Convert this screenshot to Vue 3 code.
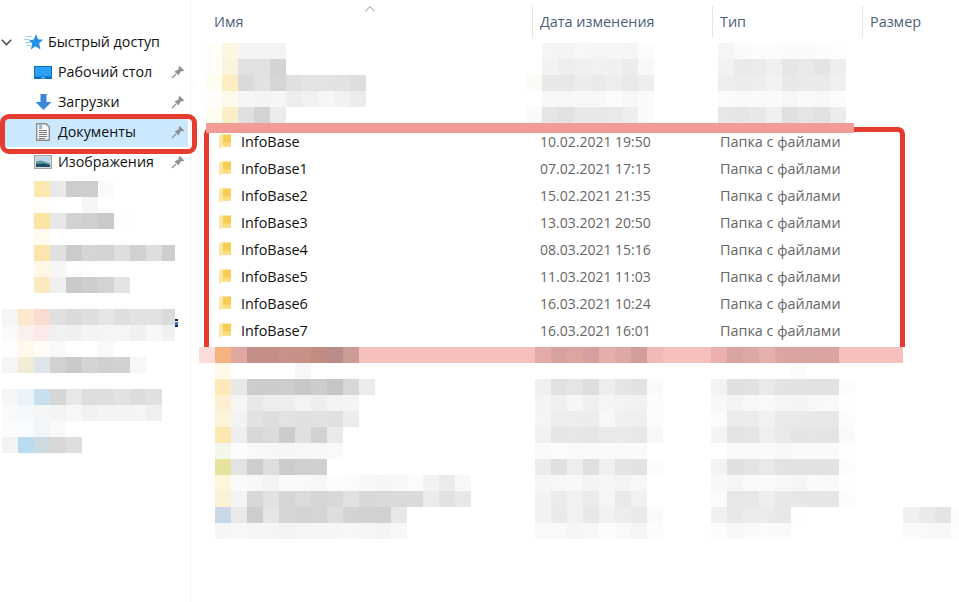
<script setup>
const g = (list) => list.map((v) => (typeof v === 'number' ? `rgb(${v},${v},${v})` : v))

const topName = [
  ['#fffdf8', '#fdf6e3', 244, 243, 243],
  ['#fffdf5', '#fbf4dc', 225, 226, 212],
  ['#fffcf0', '#fcedc2', 218, 226, 214, 224, 228, 227, 226, 222],
  ['#fffefb', '#fdfaec', 246, 244, 246, 238, 241, 246, 242, 236],
  ['#fffcf2', '#fbeec8', 224, 211, 236],
].map(g)
const topDate = [
  [255, 245, 244, 247, 246, 246, 245, 252],
  [255, 242, 238, 240, 241, 240, 236, 248],
  ['#fcfaf6', 232, 231, 236, 234, 238, 233, 238],
  [255, 248, 247, 248, 248, 252, 247, 250],
  ['#fbf9f9', 229, 226, 232, 232, 233, 238, 250],
].map(g)
const topType = [
  [245, 250, 252, 252, 250, 250, 252, 254],
  [242, 234, 235, 240, 230, 233, 228, 238],
  [238, 236, 237, 242, 232, 234, 234, 240],
  [251, 249, 250, 250, 247, 250, 248, 252],
  [231, 229, 232, 240, 224, 229, 226, 236],
].map(g)

const botPink = ['#fbdcda', '#f5b382', '#e1a8a2', '#c28e8a', '#c48e86', '#c99189', '#c79187', '#c38c80', '#b98b8a', '#cd9c95']
const botName = [
  ['#fff9ea', 255, 255, 255, 255, 247],
  ['#fde9b9', 232, 205, 204, 205, 200, 204, 197, 215, 236],
  ['#fbf0d0', 246, 232, 238, 237, 243, 238, 243, 244],
  ['#fdf3d8', 243, 226, 222, 227, 224, 226, 224, 236],
  ['#fbe8b0', 238, 216, 220, 204, 224, 210, 234],
  ['#f3f7e8', 252, 249, 247, 246, 247, 248, 249],
  ['#e5e39f', 227, 205, 222, 203, 207, 208],
  ['#fef5db', 250, 247, 243, 250, 249, 247, 252, 251, 248, 246, 248, 251, 242, 235, 248],
  ['#fbf1d4', 244, 215, 226, 214, 219, 214, 216, 225, 216, 218, 218, 218, 236, 226, 232],
  ['#c9d8e4', 233, 205, 229, 214, 211, 213, 222, 211, 209, 209, 232],
  [246, 248, 246, 245, 243, 245, 246, 246, 247, 246, 244, 248],
].map(g)
const botDatePink = ['#e4aaa6', '#d5a29f', '#dda5a0', '#d5a1a0', '#e4aeab', '#dda8a5', '#d29e9a', '#f0b9b5']
const botTypePink = ['#ecb1ad', '#d7a4a1', '#dcaaa6', '#e4b0ac', '#dca5a1', '#d9a5a0', '#d8a5a2', '#daa4a0']
const botDate = [
  [255, 255, 255, 255, 255, 255, 255, 255],
  [239, 225, 229, 222, 238, 229, 226, 250],
  [244, 240, 246, 240, 245, 243, 241, 252],
  [245, 237, 237, 236, 247, 240, 239, 252],
  [241, 229, 231, 229, 233, 234, 232, 248],
  [250, 252, 250, 250, 250, 250, 250],
  [236, 224, 237, 223, 240, 228, 226, 252],
  [246, 247, 248, 244, 246, 243, 247],
  [242, 235, 241, 235, 245, 233, 241],
  [242, 234, 241, 231, 241, 237, 234, 250],
  [249, 249, 245, 247, 252, 249, 245, 252],
].map(g)
const botType = [
  [255, 255, 255, 255, 255, 251, 255, 255, 255],
  [243, 224, 226, 233, 227, 226, 226, 226, 252],
  [248, 243, 247, 249, 246, 244, 247, 249, 254],
  [252, 235, 235, 241, 234, 233, 231, 232, 252],
  [244, 227, 229, 239, 233, 228, 229, 228, 250],
  [255, 250, 250, 250, 248, 250, 250, 250, 254],
  [243, 224, 227, 233, 227, 226, 226, 226, 252],
  [248, 246, 250, 250, 248, 246, 250, 249, 254],
  [251, 231, 231, 238, 232, 231, 230, 230, 252],
  [240, 232, 236, 235, 232, 254],
  [252, 248, 250, 251, 250],
].map(g)
const botSize = [[240, 234, 228, 252], [250, 249, 247, 253]].map(g)

const navA = [
  ['#fbe8ae', 233, 205, 205, 250],
  ['#fffdf5', 255, 255, 246],
  ['#fbe5a4', 231, 210, 207, 201, 254],
  ['#fffbef'],
  ['#fce5ad', 224, 203, 213, 211, 222, 209, 221, 205],
  ['#fff6e6', 246, 253],
  ['#fde9bf', 240, 202, 206, 211, 228],
].map(g)
const navB = [
  [245, '#fde9cd', '#f8dcd2', 224, 218, 222, 230, 222, 226, 226, 218],
  [250, '#fcf0ec', '#fbeaea', 241, 240, 244, 245, 245, 240, 248, 241],
  [253, '#fff9ec', '#fffcf6', 249, 255, 255, 249],
  [245, '#f1ecd5', '#dde5ea', 209, 202, 212, 208, 210, 247],
  [],
  [246, '#eaf3fa', '#c7e0f0', 214, 231, 221, 222, 226, 220, 224],
  [250, '#f6f9fc', 246, 244, 247, 241, 244, 243, 245, 239],
  [252, '#f8fcfe', '#f1f6fb', 249],
  [243, '#b9dcf3', '#cddae2', 216, 222],
].map(g)

const quick = [
  { label: 'Рабочий стол', icon: 'desktop' },
  { label: 'Загрузки', icon: 'down' },
  { label: 'Документы', icon: 'doc', active: true },
  { label: 'Изображения', icon: 'pic' },
]

const files = [
  ['InfoBase', '10.02.2021 19:50'],
  ['InfoBase1', '07.02.2021 17:15'],
  ['InfoBase2', '15.02.2021 21:35'],
  ['InfoBase3', '13.03.2021 20:50'],
  ['InfoBase4', '08.03.2021 15:16'],
  ['InfoBase5', '11.03.2021 11:03'],
  ['InfoBase6', '16.03.2021 10:24'],
  ['InfoBase7', '16.03.2021 16:01'],
]
</script>

<template>
  <div class="window">
    <aside class="nav">
      <div class="quick-head">
        <svg class="caret" width="11" height="7" viewBox="0 0 11 7"><path d="M.8.8 5.500 5.500 10.200.8" fill="none" stroke="#505050" stroke-width="1.600" /></svg>
        <svg class="star" width="19" height="16" viewBox="0 0 19 16">
          <path d="M12 0 14 5.300 19 5.800 15.200 9.300 16.400 15.500 11.500 12.300 6.800 15.500 8.200 9.600 5 6.500 9.800 5.500Z" fill="#2391ea" />
          <path d="M2 2.500H8M0 5.500H5.500M1 8.500H6.500M3 11.500H7" stroke="#9ed0f6" stroke-width="1.200" />
        </svg>
        <span class="q-text">Быстрый доступ</span>
      </div>
      <div v-for="q in quick" :key="q.label" class="quick-row" :class="{ active: q.active }">
        <span class="q-icon">
          <svg v-if="q.icon === 'desktop'" width="18" height="13" viewBox="0 0 18 13">
            <rect width="18" height="13" fill="#0a6fc2" />
            <rect x="1" y="1" width="16" height="9.500" fill="#2ba0f5" />
            <rect x="7" y="11.300" width="4" height="1" fill="#9fd2f5" />
          </svg>
          <svg v-else-if="q.icon === 'down'" width="17" height="16" viewBox="0 0 17 16">
            <path d="M5.500 0H11.500V8H16.500L8.500 16 .5 8H5.500Z" fill="#3b87d8" />
          </svg>
          <svg v-else-if="q.icon === 'doc'" width="14" height="18" viewBox="0 0 14 18">
            <path d="M.7.700H10L13.300 4V17.300H.7Z" fill="#fbfbfb" stroke="#8b8b8b" stroke-width="1.400" />
            <path d="M3 3H6M3 5H6" stroke="#1f6fc0" stroke-width="1.200" />
            <path d="M3 7.500H11M3 9.500H11M3 11.500H11M3 13.500H11M3 15.500H9" stroke="#777" />
          </svg>
          <svg v-else width="18" height="14" viewBox="0 0 18 14">
            <rect x=".7" y=".7" width="16.600" height="12.600" fill="#fff" stroke="#a3a3a3" stroke-width="1.400" />
            <rect x="2" y="2" width="14" height="10" fill="#bcd6ec" />
            <path d="M2 6.500 7 5.500 16 8.500V12H2Z" fill="#5d9a9a" />
            <path d="M2 9 10 8.500 16 10V12H2Z" fill="#1f4f63" />
          </svg>
        </span>
        <span class="q-label q-text">{{ q.label }}</span>
        <svg class="pin" width="14" height="14" viewBox="0 0 14 14">
          <path d="M8.500.8 13.200 5.500 11.800 6.300 9.800 6.300 8 9.500 7.600 10.500 3.500 6.400 4.500 6 7.700 4.200 7.700 2.200Z" fill="#8a9297" />
          <path d="M5 9 1 13" stroke="#8a9297" stroke-width="1.300" />
        </svg>
      </div>
      <div class="nav-mosaic-a">
        <div v-for="(row, i) in navA" :key="i" class="mrow">
          <i v-for="(c, j) in row" :key="j" class="cell" :style="{ background: c }"></i>
        </div>
      </div>
      <div class="nav-wrap">
        <div class="nav-mosaic-b">
          <div v-for="(row, i) in navB" :key="i" class="mrow">
            <i v-for="(c, j) in row" :key="j" class="cell" :style="{ background: c }"></i>
          </div>
        </div>
        <i class="stray"></i>
      </div>
    </aside>

    <main class="list">
      <header class="head">
        <svg class="sort" width="10" height="6" viewBox="0 0 10 6"><path d="M.5 5.300 5 .7 9.500 5.300" fill="none" stroke="#8a8a8a" /></svg>
        <div class="hc hc-name">Имя</div>
        <div class="hc hc-date">Дата изменения</div>
        <div class="hc hc-type">Тип</div>
        <div class="hc hc-size">Размер</div>
      </header>

      <section class="mosaic-top">
        <div class="m-top-name">
          <div v-for="(row, i) in topName" :key="i" class="mrow">
            <i v-for="(c, j) in row" :key="j" class="cell" :style="{ background: c }"></i>
          </div>
        </div>
        <div class="m-top-date">
          <div v-for="(row, i) in topDate" :key="i" class="mrow">
            <i v-for="(c, j) in row" :key="j" class="cell" :style="{ background: c }"></i>
          </div>
        </div>
        <div>
          <div v-for="(row, i) in topType" :key="i" class="mrow">
            <i v-for="(c, j) in row" :key="j" class="cell" :style="{ background: c }"></i>
          </div>
        </div>
      </section>

      <section class="files">
        <div v-for="f in files" :key="f[0]" class="file">
          <span class="f-name">
            <svg class="folder" width="12" height="16" viewBox="0 0 12 16">
              <rect x="3" y="1.500" width="9" height="12" fill="#f7cc52" />
              <rect x="3" y="9.500" width="9" height="4" fill="#fcdc80" />
              <path d="M0 2.500 4 .5V13.500L1 15.500 0 15Z" fill="#fde7a4" />
            </svg>
            {{ f[0] }}
          </span>
          <span class="f-date">{{ f[1] }}</span>
          <span class="f-type">Папка с файлами</span>
        </div>
      </section>

      <section class="pink">
        <div class="mrow pink-name">
          <i v-for="(c, j) in botPink" :key="j" class="cell" :style="{ background: c }"></i>
        </div>
        <div class="mrow pink-date">
          <i v-for="(c, j) in botDatePink" :key="j" class="cell" :style="{ background: c }"></i>
        </div>
        <div class="mrow">
          <i v-for="(c, j) in botTypePink" :key="j" class="cell" :style="{ background: c }"></i>
        </div>
      </section>

      <section class="mosaic-bot">
        <div class="m-bot-name">
          <div v-for="(row, i) in botName" :key="i" class="mrow">
            <i v-for="(c, j) in row" :key="j" class="cell" :style="{ background: c }"></i>
          </div>
        </div>
        <div class="m-bot-date">
          <div v-for="(row, i) in botDate" :key="i" class="mrow">
            <i v-for="(c, j) in row" :key="j" class="cell" :style="{ background: c }"></i>
          </div>
        </div>
        <div class="m-bot-type">
          <div v-for="(row, i) in botType" :key="i" class="mrow">
            <i v-for="(c, j) in row" :key="j" class="cell" :style="{ background: c }"></i>
          </div>
        </div>
        <div class="m-bot-size">
          <div v-for="(row, i) in botSize" :key="i" class="mrow">
            <i v-for="(c, j) in row" :key="j" class="cell" :style="{ background: c }"></i>
          </div>
        </div>
      </section>
    </main>

    <div class="mark mark-nav"></div>
    <div class="mark mark-files"></div>
    <div class="mark-bar"></div>
  </div>
</template>

<style>
html, body { margin: 0; background: #fff; }
</style>

<style scoped>
.window {
  position: relative;
  display: flex;
  width: 959px;
  height: 602px;
  overflow: hidden;
  background: #fff;
  font-family: "Open Sans", "Noto Sans", sans-serif;
  font-size: 14.4px;
  color: #111;
}
.nav {
  flex: none;
  width: 191px;
  height: 602px;
  padding-top: 27px;
  box-sizing: border-box;
  border-right: 1px solid #f2f2f2;
  font-size: 14.25px;
}
.quick-head {
  display: flex;
  align-items: center;
  height: 30px;
  padding-left: 1px;
}
.q-text { margin-top: -2px; }
.caret { margin-right: 12px; }
.star { margin-right: 5px; }
.quick-row {
  display: flex;
  align-items: center;
  height: 30px;
  padding-left: 34px;
  padding-right: 3px;
  margin-right: 2px;
}
.quick-row.active { background: #cce8ff; }
.q-icon {
  display: flex;
  justify-content: center;
  width: 18px;
  margin-right: 6px;
}
.q-label { flex: 1; }
.nav-mosaic-a { margin-top: 4px; margin-left: 34px; width: 141px; overflow: hidden; }
.nav-wrap { position: relative; margin-top: 16px; }
.nav-mosaic-b { margin-left: 2px; width: 173px; overflow: hidden; }
.stray {
  position: absolute;
  left: 175px;
  top: 10px;
  width: 3px;
  height: 8px;
  background: linear-gradient(#222 0 25%, #fff 25% 40%, #2a7fd0 40% 70%, #222 70%);
}
.mrow { display: flex; height: 16px; }
.cell { flex: none; width: 16px; height: 16px; }

.list { flex: 1; min-width: 0; }
.head {
  position: relative;
  display: flex;
  height: 43px;
  color: #4c607a;
}
.sort { position: absolute; left: 174px; top: 6px; }
.hc {
  height: 32px;
  margin-top: 6px;
  line-height: 32px;
  box-sizing: border-box;
  padding-left: 7px;
  border-right: 1px solid #e5e5e5;
}
.hc-name { width: 342px; padding-left: 23px; }
.hc-date { width: 180px; }
.hc-type { width: 150px; }
.hc-size { border-right: 0; }

.mosaic-top { display: flex; height: 80px; padding-left: 15px; }
.m-top-name { flex: none; width: 320px; }
.m-top-date { flex: none; width: 192px; }
.files { height: 224px; padding-top: 5px; box-sizing: border-box; }
.file { display: flex; align-items: center; height: 27px; }
.f-name {
  display: flex;
  align-items: center;
  width: 349px;
  padding-left: 28px;
  box-sizing: border-box;
  color: #111;
}
.folder { margin-right: 10px; margin-top: -2px; }
.f-date { width: 180px; color: #666; font-size: 14px; }
.f-type { color: #666; }

.pink {
  display: flex;
  width: 704px;
  margin-left: 8px;
  height: 16px;
  background: #f5c0bc;
}
.pink-name { width: 336px; }
.pink-date { width: 176px; }

.mosaic-bot { display: flex; padding-left: 24px; }
.m-bot-name { flex: none; width: 320px; }
.m-bot-date { flex: none; width: 176px; }
.m-bot-type { flex: none; width: 192px; }
.m-bot-size { flex: none; padding-top: 144px; }

.mark {
  position: absolute;
  box-sizing: border-box;
  border: 5px solid #e63c30;
}
.mark-nav {
  left: 0;
  top: 114px;
  width: 197px;
  height: 40px;
  border-radius: 9px;
}
.mark-files {
  left: 204px;
  top: 127px;
  width: 701px;
  height: 220px;
  border-bottom: 0;
  border-radius: 7px 7px 0 0;
}
.mark-bar {
  position: absolute;
  left: 206px;
  top: 123px;
  width: 648px;
  height: 10px;
  background: #f39c96;
}
</style>
